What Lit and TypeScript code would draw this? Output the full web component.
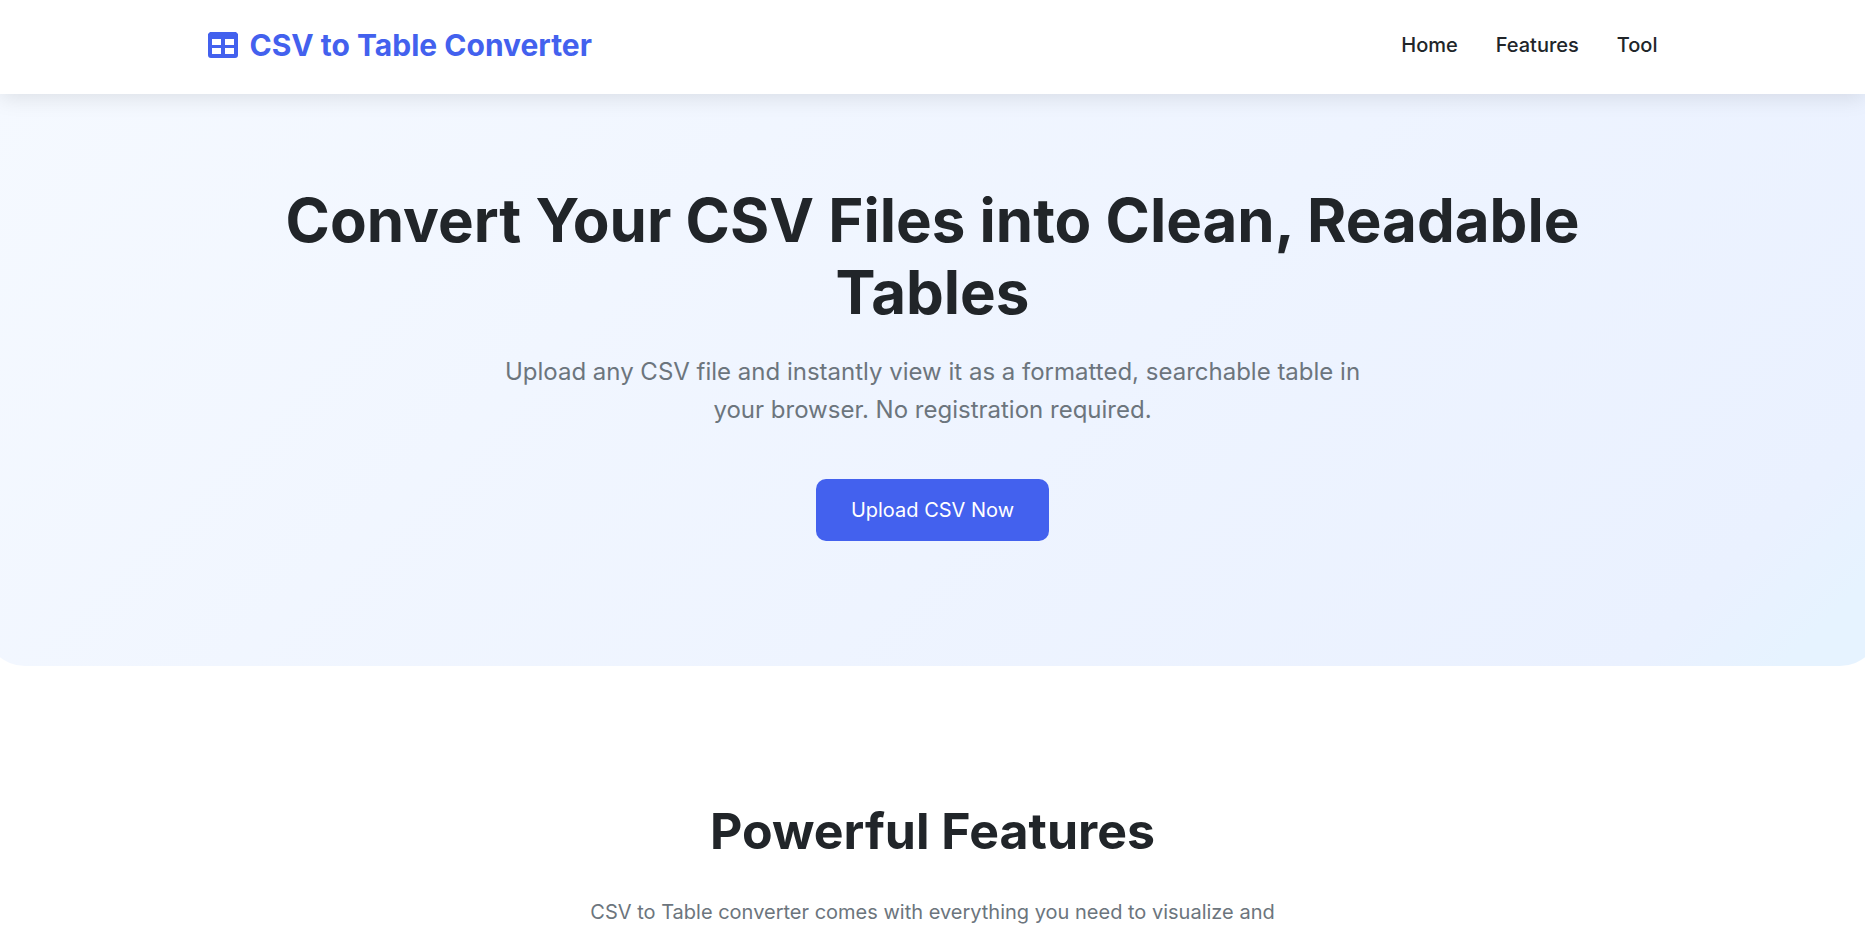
import { LitElement, html, css } from "lit";
import { customElement } from "lit/decorators.js";

@customElement("app-root")
export class AppRoot extends LitElement {
  static styles = css`
    :host {
      display: block;
      height: 100vh;
      overflow: hidden;
      background: #fff;
      color: #212529;
      font-family: Inter, "Liberation Sans", sans-serif;
      font-size: 20px;
      line-height: 32px;
    }
    h1, h2, p {
      margin: 0;
    }
    a {
      color: inherit;
      text-decoration: none;
    }
    .header {
      position: relative;
      z-index: 1;
      background: #fff;
      box-shadow: 0 4px 20px rgba(0, 0, 0, 0.1);
    }
    .bar {
      display: flex;
      justify-content: space-between;
      align-items: center;
      box-sizing: border-box;
      max-width: 1500px;
      margin: 0 auto;
      padding: 21px 25px 25px;
    }
    .brand {
      display: flex;
      align-items: center;
      gap: 12px;
      color: #4361ee;
      font-size: 30px;
      font-weight: 700;
      line-height: 48px;
    }
    .logo {
      display: block;
      width: 30px;
      height: 26px;
    }
    .nav {
      display: flex;
      gap: 38px;
      font-weight: 500;
    }
    .hero {
      margin: 0 -15px;
      padding: 90px 0 125px;
      border-radius: 0 0 40px 40px;
      background: linear-gradient(135deg, #f5f9ff 0%, #eaf1ff 90%, #e6f3ff 96%);
      text-align: center;
    }
    .title {
      max-width: 1450px;
      margin: 0 auto 25px;
      font-size: 60px;
      font-weight: 700;
      line-height: 72px;
    }
    .lead {
      max-width: 875px;
      margin: 0 auto 50px;
      color: #6c757d;
      font-size: 24px;
      line-height: 38px;
    }
    .cta {
      display: inline-block;
      padding: 15px 35px;
      border: 0;
      border-radius: 10px;
      background: #4361ee;
      color: #fff;
      font: inherit;
      vertical-align: top;
      cursor: pointer;
    }
    .features {
      padding: 135px 25px 0;
      text-align: center;
    }
    .subtitle {
      margin-bottom: 35px;
      font-size: 50px;
      font-weight: 700;
      line-height: 60px;
    }
    .intro {
      max-width: 750px;
      margin: 0 auto;
      color: #6c757d;
    }
  `;

  render() {
    return html`
      <header class="header">
        <div class="bar">
          <a class="brand" href="#home">
            <svg class="logo" viewBox="0 0 30 26" aria-hidden="true">
              <path
                fill="#4361ee"
                fill-rule="evenodd"
                d="M2 0H28L30 2V23Q30 26 27 26H3Q0 26 0 23V2ZM4 7V13H13V7ZM17 7V13H26V7ZM4 16V22H13V16ZM17 16V22H26V16Z"
              />
            </svg>
            <span>CSV to Table Converter</span>
          </a>
          <nav class="nav">
            <a href="#home">Home</a>
            <a href="#features">Features</a>
            <a href="#tool">Tool</a>
          </nav>
        </div>
      </header>
      <main>
        <section class="hero" id="home">
          <h1 class="title">Convert Your CSV Files into Clean, Readable Tables</h1>
          <p class="lead">
            Upload any CSV file and instantly view it as a formatted, searchable
            table in your browser. No registration required.
          </p>
          <button class="cta" type="button">Upload CSV Now</button>
        </section>
        <section class="features" id="features">
          <h2 class="subtitle">Powerful Features</h2>
          <p class="intro">
            CSV to Table converter comes with everything you need to visualize and
          </p>
        </section>
      </main>
    `;
  }
}
